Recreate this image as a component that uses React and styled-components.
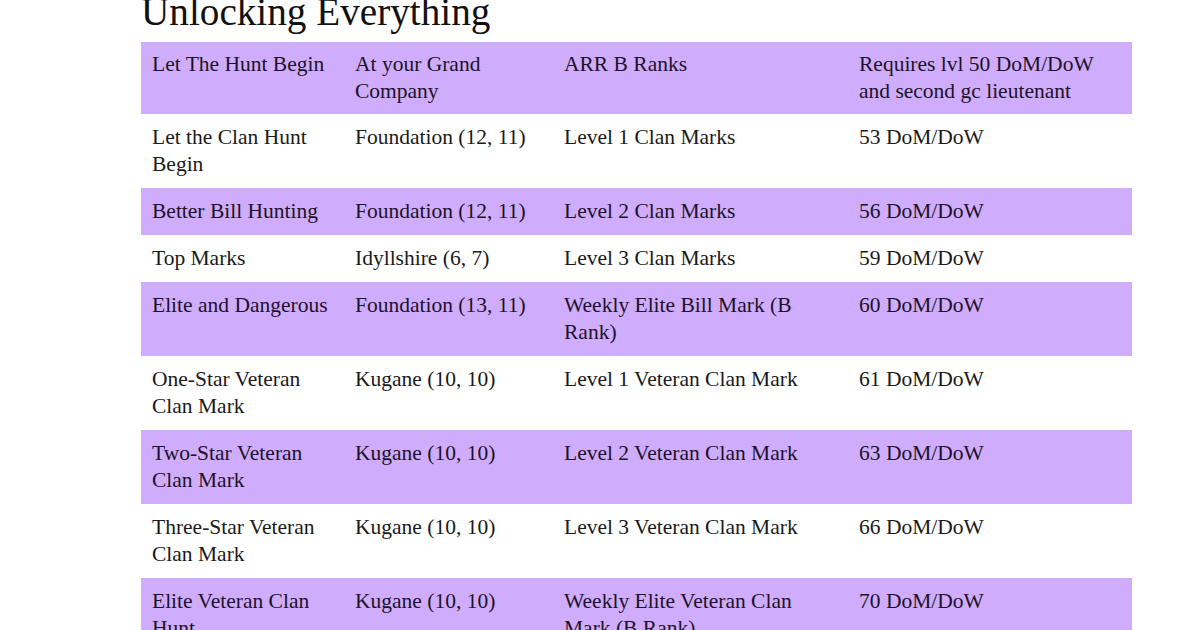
import React from "react";
import styled, { createGlobalStyle } from "styled-components";

const Global = createGlobalStyle`
  html, body { margin: 0; padding: 0; background: #ffffff; }
  body { font-family: "Liberation Serif", "Times New Roman", serif; overflow: hidden; }
`;

const Page = styled.div`
  width: 1200px;
  height: 630px;
  overflow: hidden;
  padding-left: 141px;
  box-sizing: border-box;
`;

const Title = styled.h1`
  margin: -8px 0 0 0;
  font-size: 39.2px;
  line-height: 39px;
  font-weight: normal;
  color: #111;
  height: 50px;
  white-space: nowrap;
`;

const Table = styled.table`
  border-collapse: collapse;
  width: 991px;
  table-layout: fixed;
`;

const Row = styled.tr`
  background: ${(p) => (p.$shaded ? "#cfadfc" : "#ffffff")};
  color: ${(p) => (p.$shaded ? "#1d1229" : "#1a1a1a")};
`;

const Cell = styled.td`
  padding: ${(p) => (p.$head ? "9px 11px" : "10px 11px")};
  vertical-align: top;
  font-size: 21.5px;
  line-height: 27px;
`;

const cols = [203, 209, 295, 284];

const rows = [
  ["Let The Hunt Begin", "At your Grand Company", "ARR B Ranks", "Requires lvl 50 DoM/DoW and second gc lieutenant"],
  ["Let the Clan Hunt Begin", "Foundation (12, 11)", "Level 1 Clan Marks", "53 DoM/DoW"],
  ["Better Bill Hunting", "Foundation (12, 11)", "Level 2 Clan Marks", "56 DoM/DoW"],
  ["Top Marks", "Idyllshire (6, 7)", "Level 3 Clan Marks", "59 DoM/DoW"],
  ["Elite and Dangerous", "Foundation (13, 11)", "Weekly Elite Bill Mark (B Rank)", "60 DoM/DoW"],
  ["One-Star Veteran Clan Mark", "Kugane (10, 10)", "Level 1 Veteran Clan Mark", "61 DoM/DoW"],
  ["Two-Star Veteran Clan Mark", "Kugane (10, 10)", "Level 2 Veteran Clan Mark", "63 DoM/DoW"],
  ["Three-Star Veteran Clan Mark", "Kugane (10, 10)", "Level 3 Veteran Clan Mark", "66 DoM/DoW"],
  ["Elite Veteran Clan Hunt", "Kugane (10, 10)", "Weekly Elite Veteran Clan Mark (B Rank)", "70 DoM/DoW"],
];

export default function App() {
  return (
    <>
      <Global />
      <Page>
        <Title>Unlocking Everything</Title>
        <Table>
          <colgroup>
            {cols.map((w, i) => (
              <col key={i} style={{ width: w }} />
            ))}
          </colgroup>
          <tbody>
            {rows.map((r, i) => (
              <Row key={i} $shaded={i % 2 === 0}>
                {r.map((c, j) => (
                  <Cell key={j} $head={i === 0}>{c}</Cell>
                ))}
              </Row>
            ))}
          </tbody>
        </Table>
      </Page>
    </>
  );
}
